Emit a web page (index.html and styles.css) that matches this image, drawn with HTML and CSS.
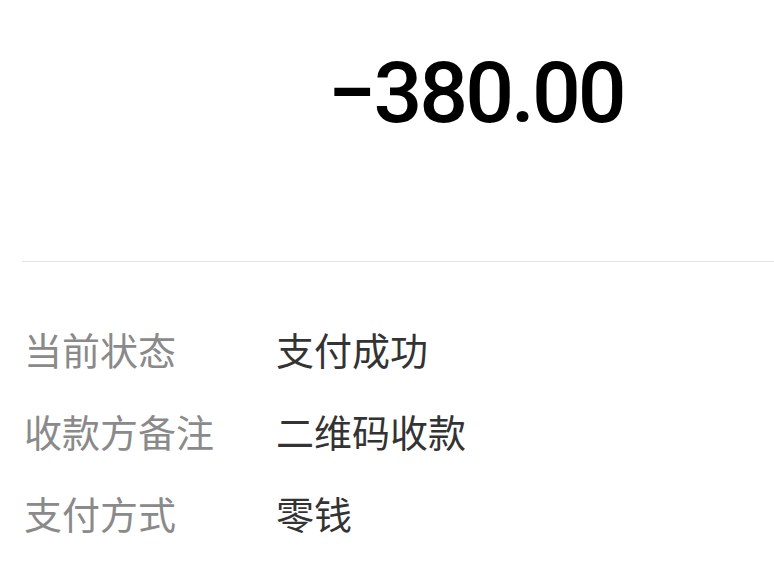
FILE: index.html
```html
<!DOCTYPE html>
<html lang="zh-CN">
<head>
    <meta charset="UTF-8">
    <meta name="viewport" content="width=device-width, initial-scale=1.0">
    <title>账单详情</title>
    <link rel="stylesheet" href="styles.css">
</head>
<body>
    <div class="amount-box">
        <div class="amount">&minus;380.00</div>
    </div>

    <div class="details">
        <div class="row">
            <span class="label">当前状态</span>
            <span class="value">支付成功</span>
        </div>
        <div class="row">
            <span class="label">收款方备注</span>
            <span class="value">二维码收款</span>
        </div>
        <div class="row">
            <span class="label">支付方式</span>
            <span class="value">零钱</span>
        </div>
    </div>
</body>
</html>
```

FILE: styles.css
```css
body {
    margin: 0;
    background: #fff;
    font-family: "Noto Sans CJK SC", "Noto Sans", sans-serif;
    overflow: hidden;
}
.amount-box {
    height: 262px;
    border-bottom: 1px solid #e5e5e5;
    margin-left: 22px;
    box-sizing: border-box;
}
.amount {
    padding-left: 306px;
    padding-top: 40px;
    font-family: Roboto, sans-serif;
    font-size: 86px;
    font-weight: 500;
    line-height: 106px;
    letter-spacing: -3px;
    color: #000;
}
.details {
    padding: 45px 0 0 24px;
}
.row {
    display: flex;
    align-items: center;
    height: 82px;
    font-size: 38px;
}
.label {
    width: 252px;
    color: #8a8a8a;
}
.value {
    color: #333;
}
```
